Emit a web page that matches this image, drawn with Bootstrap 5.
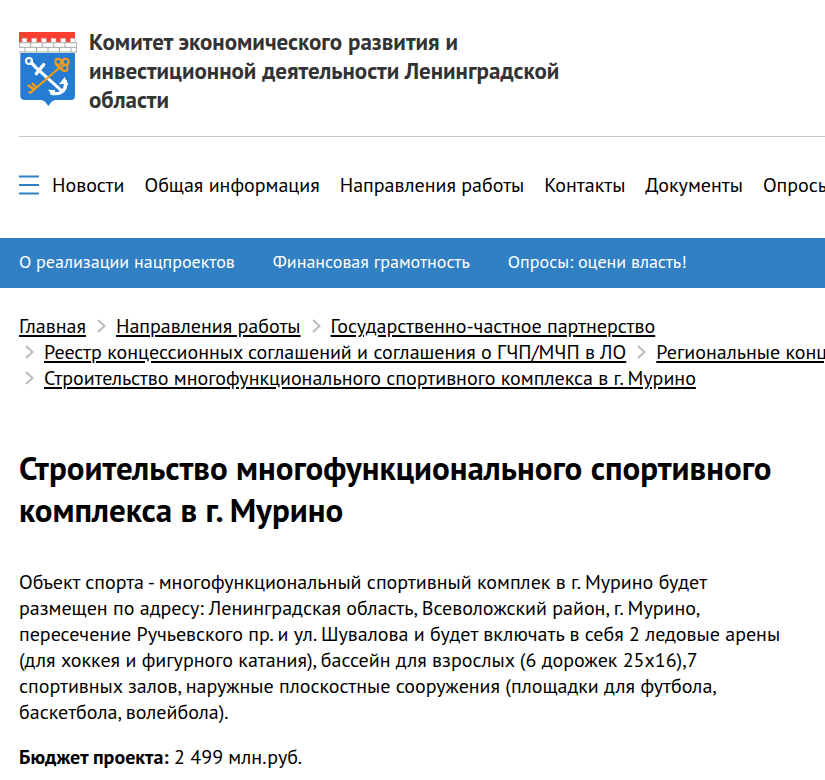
<!DOCTYPE html>
<html lang="ru">
<head>
<meta charset="utf-8">
<meta name="viewport" content="width=device-width, initial-scale=1">
<title>Строительство многофункционального спортивного комплекса в г. Мурино</title>
<link rel="stylesheet" href="https://cdn.jsdelivr.net/npm/bootstrap@5.3.0/dist/css/bootstrap.min.css">
<style>
  body { font-family: "PT Sans", "Noto Sans", sans-serif; font-size: 20px; line-height: 26px; color: #000; overflow-x: hidden; }
  .page-pad { padding-left: 19px; }
  .brand-row { padding-top: 27px; padding-bottom: 22px; border-bottom: 1px solid #c8c8c8; margin-left: 19px; gap: 12px; }
  .brand-title { font-size: 23px; line-height: 29px; font-weight: 700; color: #333; max-width: 480px; }
  .crest { margin-top: 5px; }
  .main-menu { padding-top: 35px; padding-bottom: 40px; gap: 12px; }
  .main-menu ul { gap: 20px; }
  .main-menu a { color: #000; }
  .topics { background: #3180c3; font-size: 18px; padding-top: 11px; padding-bottom: 13px; }
  .topics ul { gap: 38px; }
  .trail { min-width: 1060px; padding-top: 25px; column-gap: 5px; }
  .trail a { color: #000; text-decoration-thickness: 2px; text-underline-offset: 2px; }
  .trail svg { margin: 0 10px 0 6px; }
  .page-title { font-size: 33px; line-height: 42px; font-weight: 700; margin: 56px 0 38px; max-width: 790px; }
  .article-text { max-width: 790px; }
  .article-text p { margin-bottom: 19px; }
</style>
<script src="https://cdn.jsdelivr.net/npm/bootstrap@5.3.0/dist/js/bootstrap.bundle.min.js"></script>
</head>
<body>
<svg class="d-none" aria-hidden="true"><symbol id="chev" viewBox="0 0 9 14"><path d="M1 1l6.500 6L1 13" fill="none" stroke="#bbb" stroke-width="2"/></symbol></svg>
<header>
  <div class="brand-row d-flex align-items-start">
    <svg class="crest flex-shrink-0" width="58" height="75" viewBox="27 21 174 225" role="img" aria-label="Герб">
      <path d="M27 21H195V53H27z" fill="#fa3f32"/>
      <path d="M27 52h9V40h15v12h14V40h15v12h14V40h15v12h14V40h15v12h14V40h15v12h14V40h14v12h10v30H27z" fill="#fff"/>
      <path d="M36 52V40h15v12h14V40h15v12h14V40h15v12h14V40h15v12h14V40h15v12h14V40h14v12" fill="none" stroke="#c99" stroke-width="2"/>
      <path d="M27 53H201M27 67H201M27 81H201M28 53v13M62 53v13M97 53v13M131 53v13M165 53v13M200 53v28M45 67v14M80 67v14M114 67v14M148 67v14M183 67v14" fill="none" stroke="#a8a8a8" stroke-width="3"/>
      <path d="M31 84H195V213q0 12-12 12H137q-11 0-22 18q-11-18-22-18H45q-14 0-14-12z" fill="#267bd2"/>
      <g fill="none" stroke="#fff" stroke-width="6">
        <circle cx="57" cy="108" r="9"/>
        <path d="M64 113L77 127M79 146L101 119" stroke-width="10" stroke-linecap="round"/>
        <path d="M77 127L157 199" stroke-width="9"/>
        <path d="M165 166Q172 192 151 203Q138 209 121 203" stroke-width="10"/>
      </g>
      <path d="M147 178l17-22 12 25-10-5zM114 194l22 2-6 17z" fill="#fff"/>
      <g fill="none" stroke="#f79c13" stroke-width="6">
        <path d="M60 205L148 128"/>
        <circle cx="145" cy="110" r="9"/><circle cx="167" cy="110" r="9"/><circle cx="164" cy="129" r="9"/>
        <path d="M137 117l17 17M54 180l20 15M66 174l13 14M56 203l10-2" stroke-width="7"/>
      </g>
    </svg>
    <div class="brand-title">Комитет экономического развития и инвестиционной деятельности Ленинградской области</div>
  </div>
  <nav class="main-menu page-pad d-flex align-items-center overflow-hidden" aria-label="Основное меню">
    <button type="button" class="btn p-0 border-0 rounded-0 d-flex flex-shrink-0" aria-label="Открыть меню">
      <svg width="21" height="20" viewBox="0 0 21 20"><path d="M0 1.500h20M0 10h20M0 18.500h20" stroke="#3180c3" stroke-width="2"/></svg>
    </button>
    <ul class="list-unstyled d-flex mb-0 text-nowrap">
      <li><a class="text-decoration-none" href="#">Новости</a></li>
      <li><a class="text-decoration-none" href="#">Общая информация</a></li>
      <li><a class="text-decoration-none" href="#">Направления работы</a></li>
      <li><a class="text-decoration-none" href="#">Контакты</a></li>
      <li><a class="text-decoration-none" href="#">Документы</a></li>
      <li><a class="text-decoration-none" href="#">Опросы</a></li>
    </ul>
  </nav>
  <nav class="topics page-pad" aria-label="Темы">
    <ul class="list-unstyled d-flex mb-0 text-nowrap">
      <li><a class="text-white text-decoration-none" href="#">О реализации нацпроектов</a></li>
      <li><a class="text-white text-decoration-none" href="#">Финансовая грамотность</a></li>
      <li><a class="text-white text-decoration-none" href="#">Опросы: оцени власть!</a></li>
    </ul>
  </nav>
</header>
<main class="page-pad overflow-hidden">
  <nav aria-label="Навигационная цепочка">
    <ol class="trail list-unstyled d-flex flex-wrap mb-0 text-nowrap">
      <li><a href="#">Главная</a></li>
      <li class="d-flex align-items-center"><svg width="9" height="14"><use href="#chev"/></svg><a href="#">Направления работы</a></li>
      <li class="d-flex align-items-center"><svg width="9" height="14"><use href="#chev"/></svg><a href="#">Государственно-частное партнерство</a></li>
      <li class="d-flex align-items-center"><svg width="9" height="14"><use href="#chev"/></svg><a href="#">Реестр концессионных соглашений и соглашения о ГЧП/МЧП в ЛО</a></li>
      <li class="d-flex align-items-center"><svg width="9" height="14"><use href="#chev"/></svg><a href="#">Региональные концессионные соглашения</a></li>
      <li class="d-flex align-items-center"><svg width="9" height="14"><use href="#chev"/></svg><a href="#">Строительство многофункционального спортивного комплекса в г. Мурино</a></li>
    </ol>
  </nav>
  <h1 class="page-title">Строительство многофункционального спортивного комплекса в г. Мурино</h1>
  <div class="article-text">
    <p>Объект спорта - многофункциональный спортивный комплек в г. Мурино будет<br>размещен по адресу: Ленинградская область, Всеволожский район, г. Мурино,<br>пересечение Ручьевского пр. и ул. Шувалова и будет включать в себя 2 ледовые арены<br>(для хоккея и фигурного катания), бассейн для взрослых (6 дорожек 25х16),7<br>спортивных залов, наружные плоскостные сооружения (площадки для футбола,<br>баскетбола, волейбола).</p>
    <p class="mb-0"><strong>Бюджет проекта:</strong> 2 499 млн.руб.</p>
  </div>
</main>
</body>
</html>
